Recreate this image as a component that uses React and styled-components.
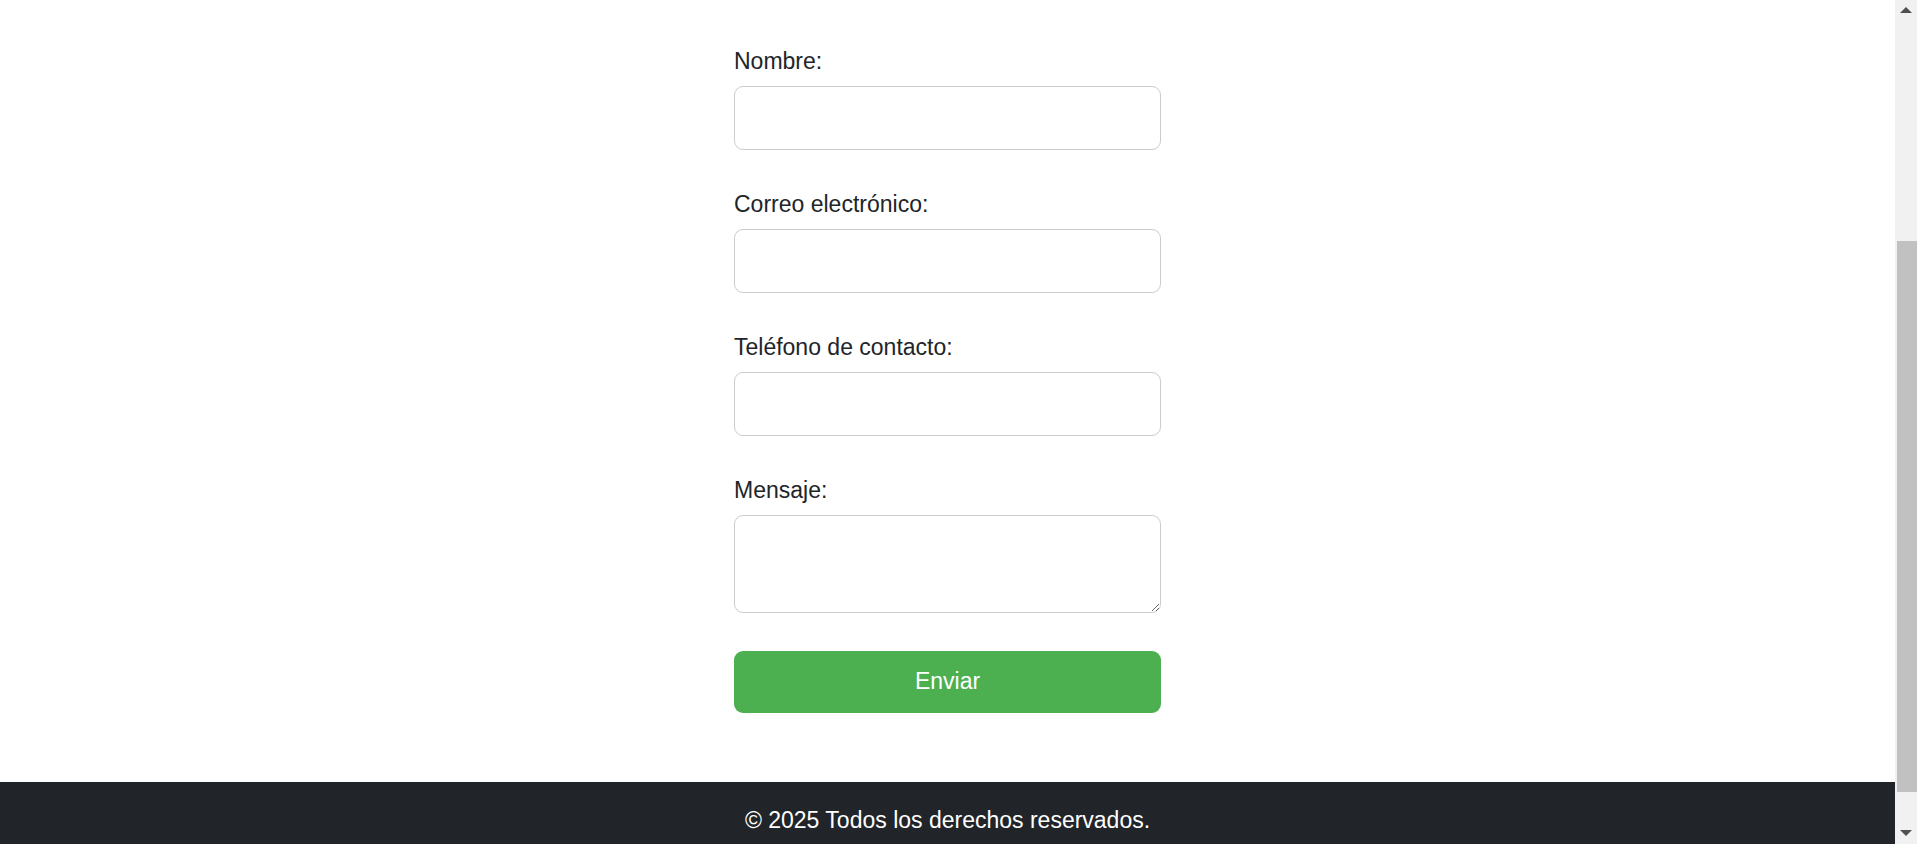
import React, { useLayoutEffect, useRef } from 'react'
import styled, { createGlobalStyle } from 'styled-components'

const GlobalStyle = createGlobalStyle`
  html, body {
    margin: 0;
    padding: 0;
    height: 100%;
    overflow: hidden;
    background: #ffffff;
  }
  * {
    box-sizing: border-box;
  }
`

// the page is shown scrolled down, as in a browser window
const VIEW_HEIGHT = 844
const CONTENT_HEIGHT = 1229
const SCROLL_TOP = 337
const ARROW_SIZE = 21

const Window = styled.div`
  display: flex;
  height: 100vh;
  font-family: "Liberation Sans", Arial, sans-serif;
  color: #212529;
`

const Viewport = styled.div`
  flex: 1;
  height: 100%;
  overflow: hidden;
`

const ScrollBar = styled.div`
  width: 22px;
  display: flex;
  flex-direction: column;
  background: #f1f1f1;
`

const ArrowButton = styled.div`
  height: ${ARROW_SIZE}px;
  display: flex;
  justify-content: center;
  align-items: ${(props) => (props.$down ? 'flex-start' : 'flex-end')};
  padding: ${(props) => (props.$down ? '7px 0 0' : '0 0 8px')};
  svg {
    display: block;
  }
`

const Track = styled.div`
  flex: 1;
  padding-left: 2px;
`

const Thumb = styled.div`
  background: #c1c1c1;
`

const Main = styled.main`
  padding: 385px 0 69.5px;
`

const Form = styled.form`
  width: 427px;
  margin: 0 auto;
  display: flex;
  flex-direction: column;
`

const Field = styled.div`
  display: flex;
  flex-direction: column;
  gap: 12px;
  margin-bottom: ${(props) => props.$spacing || 41}px;
`

const Label = styled.label`
  font-size: 23px;
  line-height: 26px;
  color: #212529;
`

const Input = styled.input`
  display: block;
  width: 100%;
  height: 64px;
  padding: 0 14px;
  border: 1px solid #cccccc;
  border-radius: 9px;
  font-family: inherit;
  font-size: 23px;
  background: #ffffff;
  outline: none;
`

const TextArea = styled.textarea`
  display: block;
  width: 100%;
  height: 98px;
  padding: 10px 14px;
  border: 1px solid #cccccc;
  border-radius: 9px;
  font-family: inherit;
  font-size: 23px;
  resize: vertical;
  background: #ffffff;
  outline: none;
`

const SubmitButton = styled.button`
  width: 100%;
  height: 62px;
  border: none;
  border-radius: 9px;
  background: #4caf50;
  color: #ffffff;
  font-family: inherit;
  font-size: 23px;
  cursor: pointer;
`

const Footer = styled.footer`
  background: #212529;
  color: #ffffff;
  text-align: center;
  padding: 25px 0 59px;
  font-size: 23px;
  line-height: 26px;
`

const fields = [
  { id: 'nombre', label: 'Nombre:', type: 'text' },
  { id: 'correo', label: 'Correo electrónico:', type: 'email' },
  { id: 'telefono', label: 'Teléfono de contacto:', type: 'tel' },
]

function Arrow({ down }) {
  return (
    <svg width="12" height="6" viewBox="0 0 12 6">
      <polygon points={down ? '0,0 12,0 6,6' : '0,6 12,6 6,0'} fill="#505050" />
    </svg>
  )
}

export default function App() {
  const viewRef = useRef(null)

  useLayoutEffect(() => {
    if (viewRef.current) viewRef.current.scrollTop = SCROLL_TOP
  }, [])

  const track = VIEW_HEIGHT - ARROW_SIZE * 2
  const thumbHeight = (track * VIEW_HEIGHT) / CONTENT_HEIGHT
  const thumbTop = (track * SCROLL_TOP) / CONTENT_HEIGHT

  return (
    <>
      <GlobalStyle />
      <Window>
        <Viewport ref={viewRef}>
          <Main>
            <Form onSubmit={(e) => e.preventDefault()}>
              {fields.map((f) => (
                <Field key={f.id}>
                  <Label htmlFor={f.id}>{f.label}</Label>
                  <Input id={f.id} type={f.type} />
                </Field>
              ))}
              <Field $spacing={37.5}>
                <Label htmlFor="mensaje">Mensaje:</Label>
                <TextArea id="mensaje" />
              </Field>
              <SubmitButton type="submit">Enviar</SubmitButton>
            </Form>
          </Main>
          <Footer>© 2025 Todos los derechos reservados.</Footer>
        </Viewport>
        <ScrollBar>
          <ArrowButton>
            <Arrow />
          </ArrowButton>
          <Track>
            <Thumb style={{ marginTop: thumbTop, height: thumbHeight }} />
          </Track>
          <ArrowButton $down>
            <Arrow down />
          </ArrowButton>
        </ScrollBar>
      </Window>
    </>
  )
}
